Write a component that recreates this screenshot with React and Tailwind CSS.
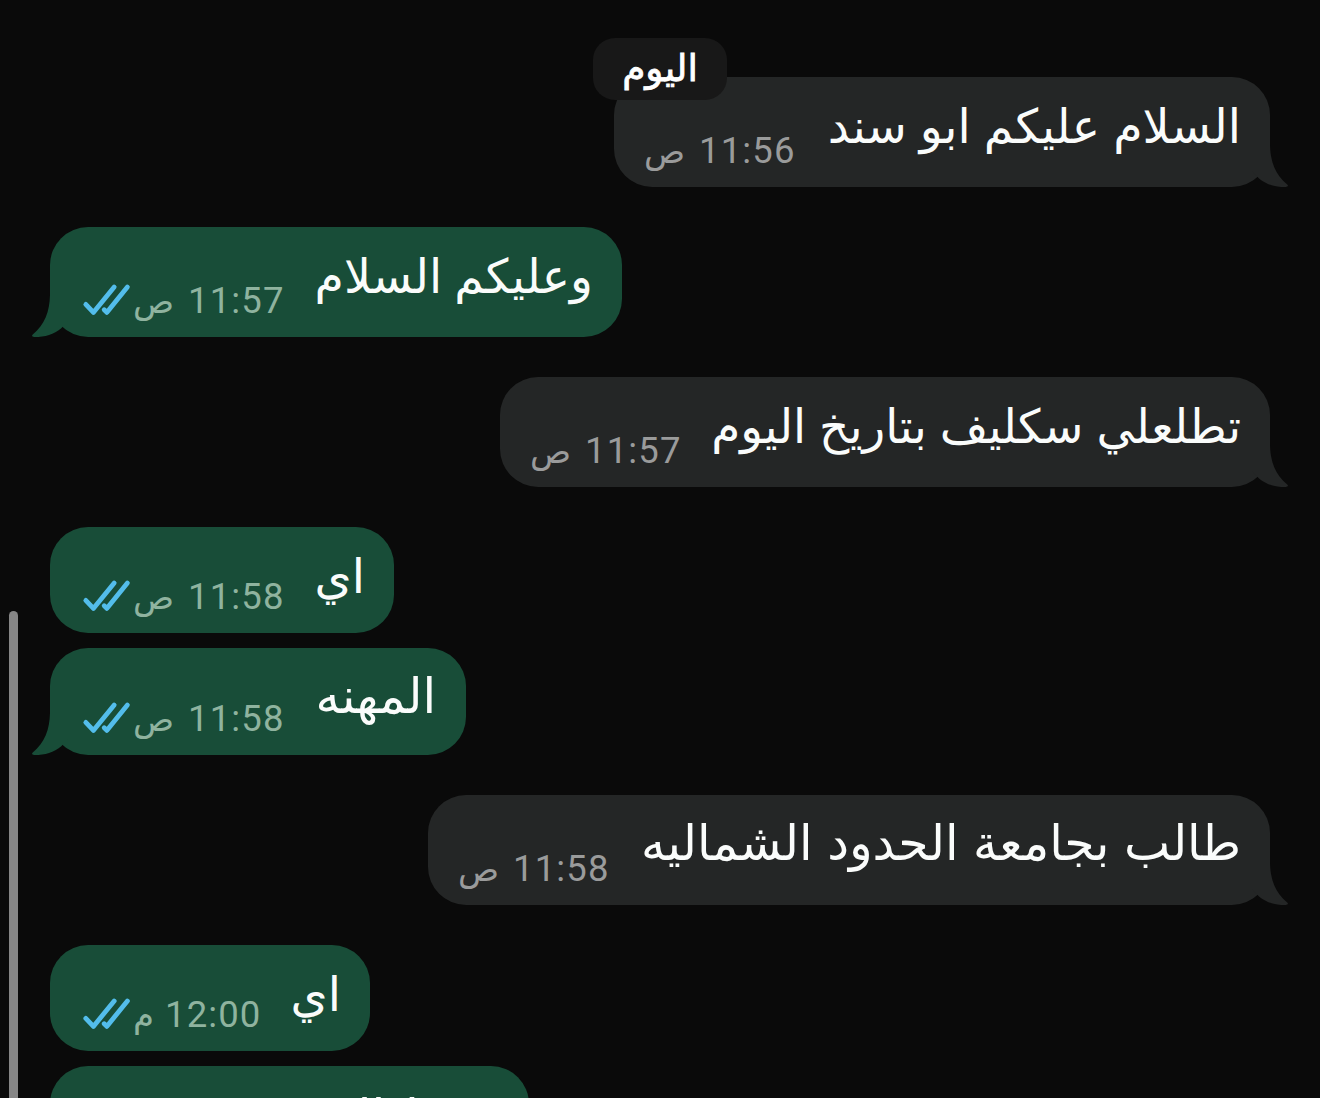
import React from 'react';
import clsx from 'clsx';

const messages = [
  { id: 1, text: 'السلام عليكم ابو سند', time: '11:56', period: 'ص', from: 'them', tail: true, box: 'w-[656px] h-[110px] mt-[77px]', font: 'mt-5 text-[47.5px] [word-spacing:-2px]' },
  { id: 2, text: 'وعليكم السلام', time: '11:57', period: 'ص', from: 'me', tail: true, box: 'w-[572px] h-[110px] mt-10', font: 'mt-5 text-[47.4px] [word-spacing:-3px]' },
  { id: 3, text: 'تطلعلي سكليف بتاريخ اليوم', time: '11:57', period: 'ص', from: 'them', tail: true, box: 'w-[770px] h-[110px] mt-10', font: 'mt-5 text-[47px] [word-spacing:-2px]' },
  { id: 4, text: 'اي', time: '11:58', period: 'ص', from: 'me', tail: false, box: 'w-[344px] h-[106px] mt-10', font: 'mt-5 text-[47.5px]' },
  { id: 5, text: 'المهنه', time: '11:58', period: 'ص', from: 'me', tail: true, box: 'w-[416px] h-[107px] mt-[15px]', font: 'mt-[19px] mr-px text-[49px]' },
  { id: 6, text: 'طالب بجامعة الحدود الشماليه', time: '11:58', period: 'ص', from: 'them', tail: true, box: 'w-[842px] h-[110px] mt-10', font: 'mt-[19px] text-[49px] [word-spacing:-1px]' },
  { id: 7, text: 'اي', time: '12:00', period: 'م', from: 'me', tail: false, box: 'w-[320px] h-[106px] mt-10', font: 'mt-5 text-[47.5px]' },
  { id: 8, text: 'فقط اليوم', from: 'me', tail: true, box: 'w-[479px] h-[106px] mt-[15px]', font: 'mt-[22px] mr-1.5 text-[50px] [word-spacing:-4px]' },
];

function ReadTicks() {
  return (
    <svg width="50" height="34" viewBox="0 0 50 34" fill="none" stroke="#53bdeb" strokeWidth="4.8" strokeLinecap="round" strokeLinejoin="round" className="shrink-0">
      <path d="M3.8 21.4 11.4 29.4 32.2 4" />
      <path d="M22.2 26.8 24.8 29.4 45.4 4" />
    </svg>
  );
}

function Tail({ mine }) {
  return (
    <svg
      width="40"
      height="42"
      viewBox="0 0 40 42"
      className={clsx('absolute bottom-0', mine ? '-left-5 -scale-x-100 fill-[#184d38]' : '-right-5 fill-[#242626]')}
    >
      <path d="M2 0H20C20.5 17 25 29 37.5 39.8Q39 41.5 35.5 42C25 42 16 39.5 9 33.5L2 26Z" />
    </svg>
  );
}

function Bubble({ message, children }) {
  const mine = message.from === 'me';
  return (
    <div
      className={clsx(
        'relative flex shrink-0 justify-between rounded-[38px] pr-[29px]',
        mine ? 'self-start bg-[#184d38] pl-8' : 'self-end bg-[#242626] pl-[30px]',
        message.box
      )}
    >
      {message.tail && <Tail mine={mine} />}
      <div className="relative flex items-end pb-4">
        {mine && message.time && (
          <div className="pb-1">
            <ReadTicks />
          </div>
        )}
        {message.time && (
          <div
            dir="rtl"
            className={clsx(
              'flex items-baseline leading-10 whitespace-nowrap',
              message.period === 'م' ? 'gap-[11px]' : 'gap-[14px]',
              mine ? 'pl-px text-[#8fb39f]' : 'text-[#9a9b9b]'
            )}
          >
            <span dir="ltr" className="font-['Roboto',sans-serif] text-[36.5px] tracking-[1.1px]">{message.time}</span>
            <span className="font-['DejaVu_Sans',sans-serif] text-[34px]">{message.period}</span>
          </div>
        )}
      </div>
      <p
        dir="rtl"
        className={clsx("relative h-[60px] font-['DejaVu_Sans',sans-serif] leading-[60px] whitespace-nowrap text-[#fafcfb]", message.font)}
      >
        {message.text}
      </p>
      {children}
    </div>
  );
}

export default function App() {
  return (
    <div className="relative flex h-[1098px] w-[1320px] flex-col overflow-hidden bg-[#0a0a0a] pr-[50px] pl-[50px]">
      {messages.map((message) => (
        <Bubble key={message.id} message={message}>
          {/* Date chip floats over the first message */}
          {message.id === 1 && (
            <div
              dir="rtl"
              className="absolute -top-[39px] -left-[21px] flex h-[62px] w-[134px] items-center justify-center rounded-[22px] bg-[#181818] pb-0.5 font-['DejaVu_Sans',sans-serif] text-[37.5px] leading-[60px] font-medium text-white [-webkit-text-stroke:0.8px_white]"
            >
              اليوم
            </div>
          )}
        </Bubble>
      ))}
      {/* Scroll indicator */}
      <div className="absolute top-[611px] left-[9px] h-[520px] w-[9px] rounded-full bg-[#868686]" />
    </div>
  );
}
